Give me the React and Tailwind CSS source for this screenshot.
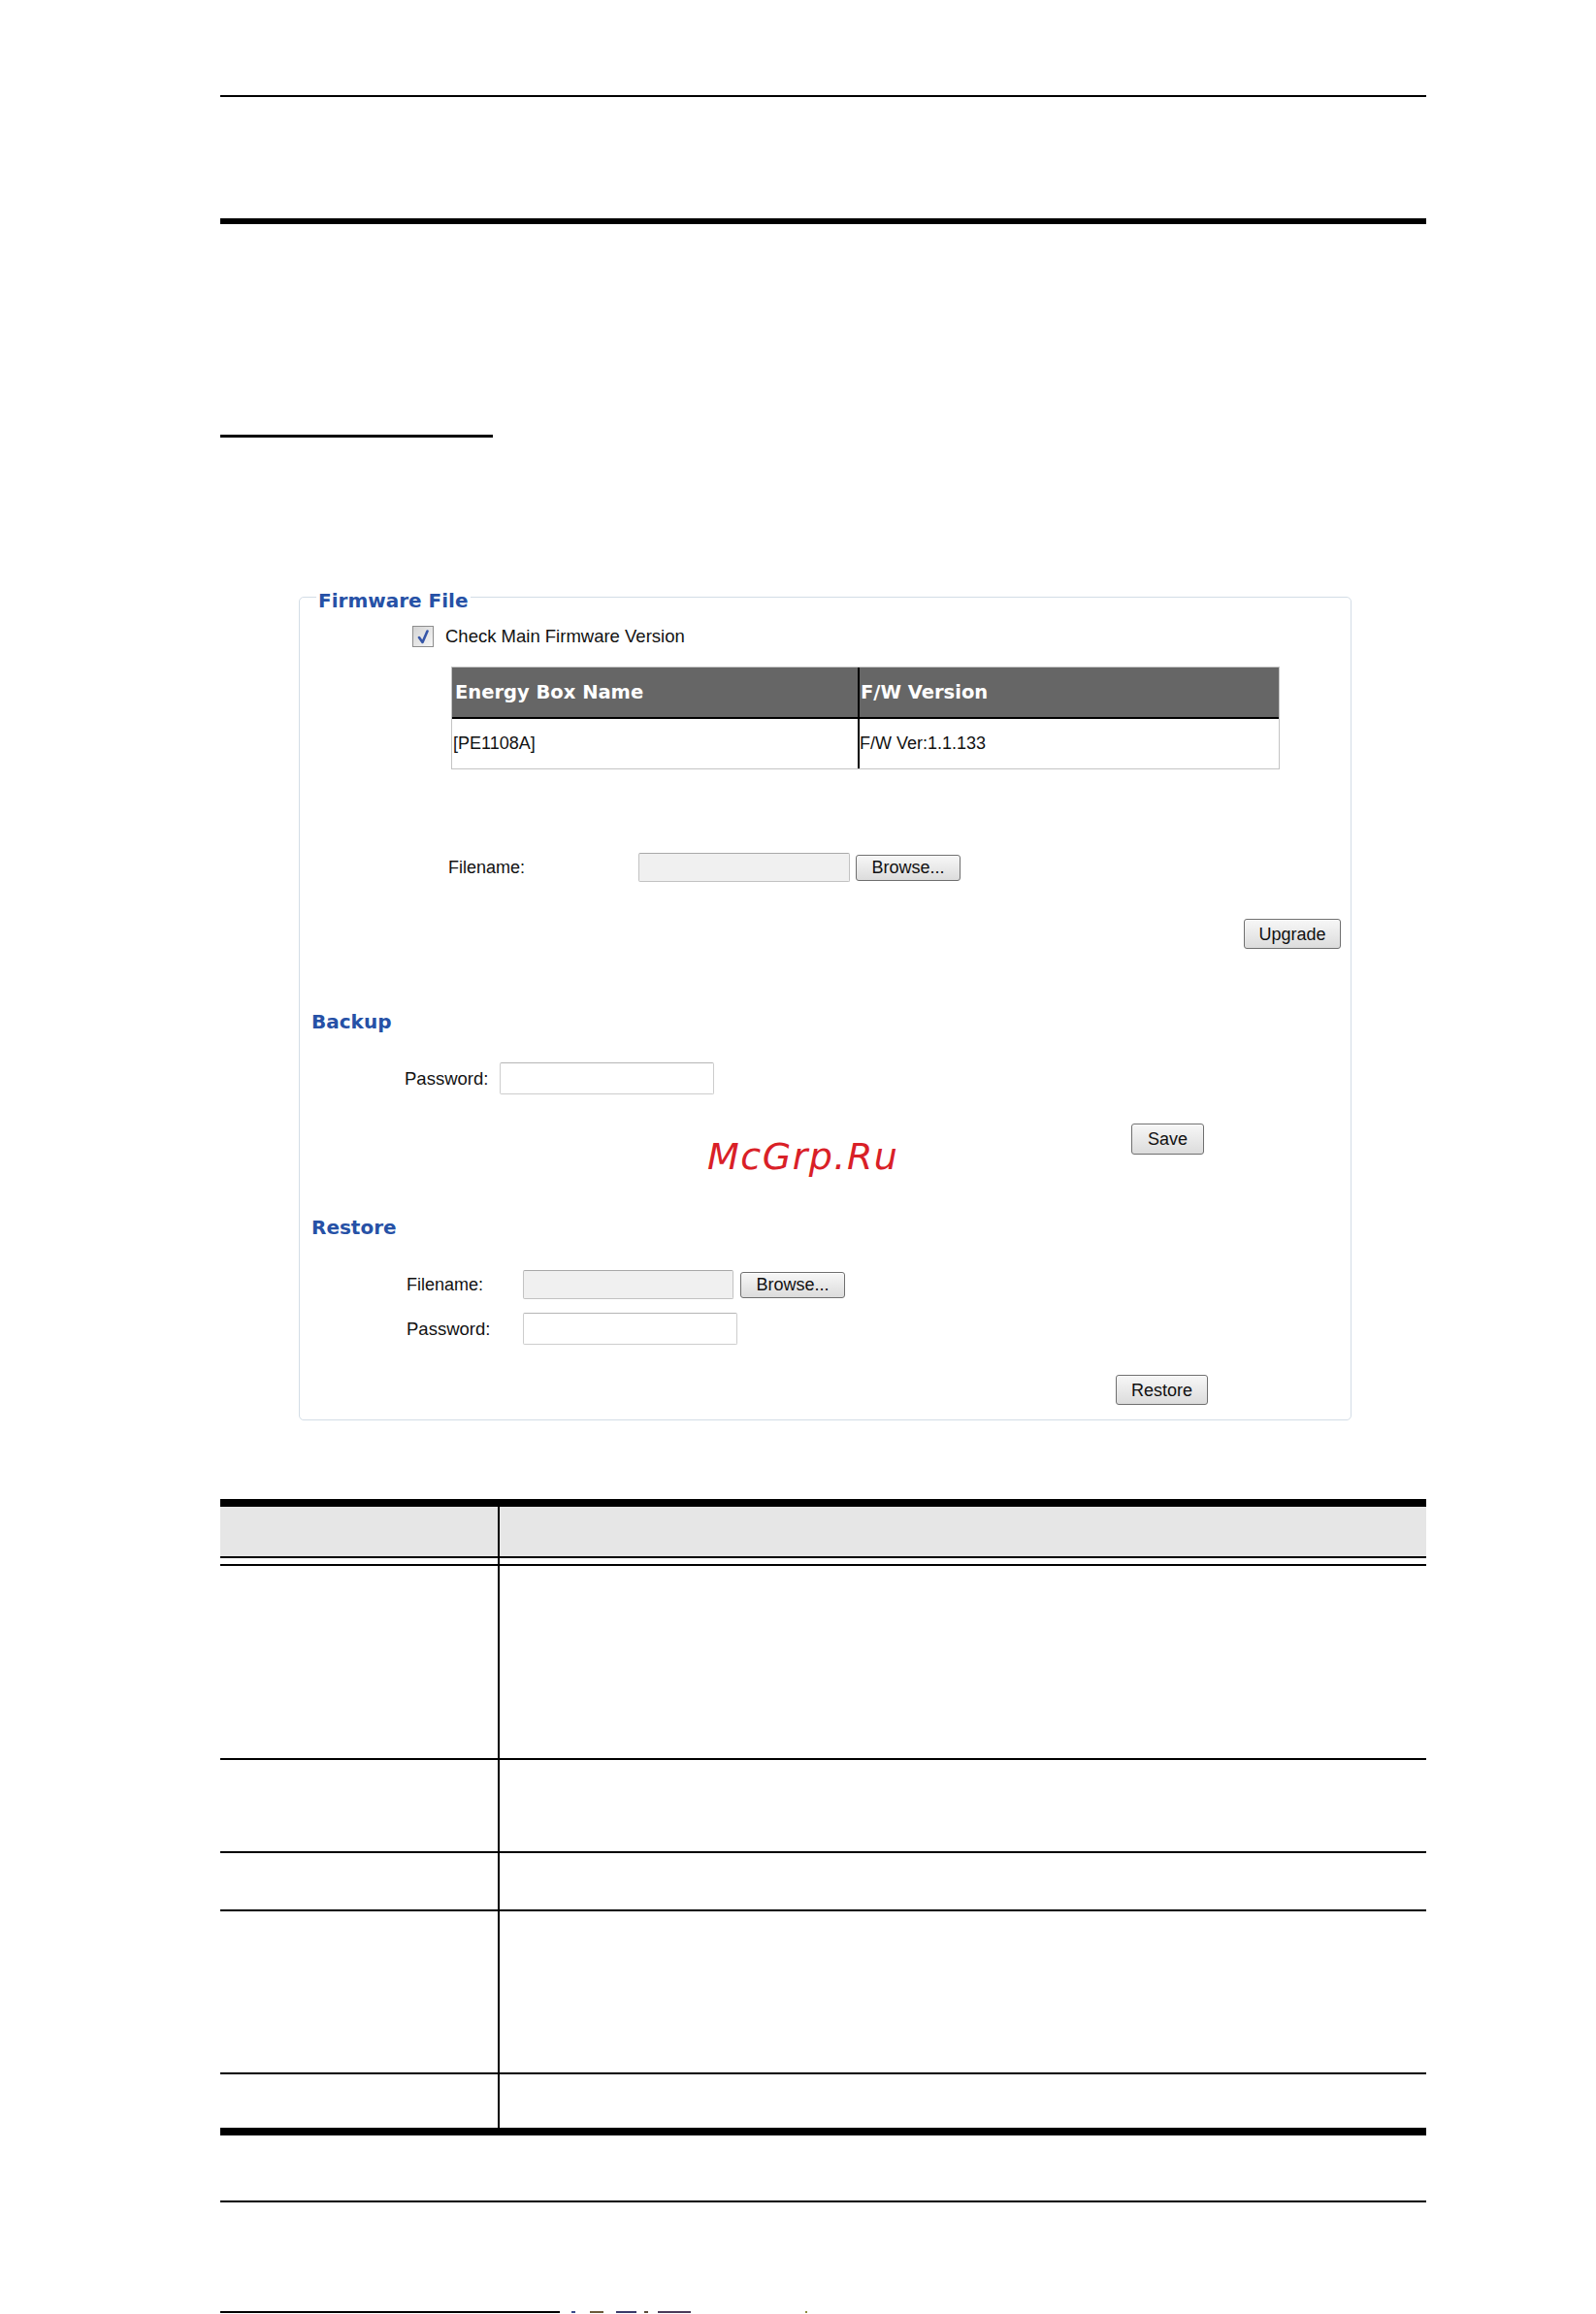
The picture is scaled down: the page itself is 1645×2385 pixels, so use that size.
import React from 'react';

const arial = "font-['Liberation_Sans',Arial,sans-serif]";
const dejavu = "font-['DejaVu_Sans',Verdana,sans-serif]";

function Button({ children, className = '' }) {
  return (
    <button
      type="button"
      className={`${arial} text-[18px] leading-none text-[#111] border border-[#6f6f6f] rounded-[3px] bg-gradient-to-b from-[#f7f7f7] to-[#dcdcdc] shadow-[inset_0_1px_0_#ffffff] flex items-center justify-center ${className}`}
    >
      {children}
    </button>
  );
}

function FileInput({ className = '' }) {
  return (
    <input
      type="text"
      readOnly
      className={`bg-[#f0f0f0] border border-[#c2c2c2] border-t-[#a8a8a8] rounded-[2px] outline-none ${className}`}
    />
  );
}

function PassInput({ className = '' }) {
  return (
    <input
      type="password"
      className={`bg-white border border-[#cdcdcd] border-t-[#b5b5b5] rounded-[2px] outline-none ${className}`}
    />
  );
}

function Heading({ children, className = '' }) {
  return (
    <div className={`${dejavu} font-bold text-[20px] leading-[24px] text-[#2651a6] ${className}`}>
      {children}
    </div>
  );
}

function Checkbox() {
  return (
    <div className="w-[22px] h-[22px] border border-[#8d8d8d] bg-gradient-to-br from-[#d4d4d4] to-[#f6f6f6] flex items-center justify-center">
      <svg width="15" height="15" viewBox="0 0 15 15">
        <path d="M3 8 L6.5 13 L11.5 1.5" fill="none" stroke="#3656a8" strokeWidth="2.6" strokeLinejoin="round" strokeLinecap="round" />
      </svg>
    </div>
  );
}

const rows = [198, 94, 58, 166, 55];

export default function App() {
  return (
    <div className="relative w-[1645px] h-[2385px] bg-white overflow-hidden pl-[227px]">
      <div className="w-[1243px] flex flex-col">
        {/* page header rules */}
        <div className="mt-[98px] h-[2px] bg-black" />
        <div className="mt-[125px] h-[6px] bg-black" />
        <div className="mt-[217px] h-[3px] w-[281px] bg-black" />

        {/* Firmware panel */}
        <div className="relative mt-[164px] ml-[81px] w-[1085px] h-[849px] border border-[#d3dde6] rounded-[5px] flex flex-col">
          <span className={`absolute top-[-9px] left-[17px] px-[2px] bg-white ${dejavu} font-bold text-[20px] leading-[24px] text-[#2651a6]`}>
            Firmware File
          </span>

          <div className="mt-[29px] ml-[116px] h-[22px] flex items-center gap-[12px]">
            <Checkbox />
            <span className={`${arial} text-[18.5px] leading-none text-[#111]`}>Check Main Firmware Version</span>
          </div>

          {/* firmware table */}
          <div className="mt-[20px] ml-[156px] w-[854px] border border-[#c4c4c4] flex flex-col">
            <div className={`h-[53px] bg-[#666666] border-b-2 border-black flex ${dejavu} font-bold text-[19.5px] text-white`}>
              <div className="w-[420px] border-r-2 border-black flex items-center pl-[3px]">Energy Box Name</div>
              <div className="flex-1 flex items-center pl-[1px]">F/W Version</div>
            </div>
            <div className={`h-[51px] bg-white flex ${arial} text-[18px] text-[#111]`}>
              <div className="w-[420px] border-r-2 border-black flex items-center pl-[1px]">[PE1108A]</div>
              <div className="flex-1 flex items-center">F/W Ver:1.1.133</div>
            </div>
          </div>

          <div className="mt-[86px] ml-[153px] h-[30px] flex items-center">
            <span className={`w-[196px] ${arial} text-[18px] text-[#111]`}>Filename:</span>
            <FileInput className="w-[218px] h-[30px]" />
            <Button className="ml-[6px] w-[108px] h-[27px]">Browse...</Button>
          </div>

          <div className="mt-[38px] pr-[10px] flex justify-end">
            <Button className="w-[100px] h-[31px]">Upgrade</Button>
          </div>

          <Heading className="mt-[63px] ml-[12px]">Backup</Heading>

          <div className="mt-[30px] ml-[108px] h-[33px] flex items-center">
            <span className={`w-[98px] ${arial} text-[18.5px] text-[#111]`}>Password:</span>
            <PassInput className="w-[221px] h-[33px]" />
          </div>

          <div className="mt-[30px] ml-[857px]">
            <Button className="w-[75px] h-[32px]">Save</Button>
          </div>

          <Heading className="mt-[63px] ml-[12px]">Restore</Heading>

          <div className="mt-[32px] ml-[110px] h-[30px] flex items-center">
            <span className={`w-[120px] ${arial} text-[18px] text-[#111]`}>Filename:</span>
            <FileInput className="w-[217px] h-[30px]" />
            <Button className="ml-[7px] w-[108px] h-[27px]">Browse...</Button>
          </div>

          <div className="mt-[14px] ml-[110px] h-[33px] flex items-center">
            <span className={`w-[120px] ${arial} text-[18.5px] text-[#111]`}>Password:</span>
            <PassInput className="w-[221px] h-[33px]" />
          </div>

          <div className="mt-[31px] ml-[841px]">
            <Button className="w-[95px] h-[31px]">Restore</Button>
          </div>
        </div>

        {/* description table */}
        <div className="mt-[81px] flex flex-col">
          <div className="h-[8px] bg-black" />
          <div className="h-[51px] bg-[#e6e6e6] flex">
            <div className="w-[288px] border-r-2 border-black" />
          </div>
          <div className="h-[10px] border-y-2 border-black flex">
            <div className="w-[288px] border-r-2 border-black" />
          </div>
          {rows.map((h, i) => (
            <div
              key={i}
              className={`flex ${i < rows.length - 1 ? 'border-b-2 border-black' : ''}`}
              style={{ height: h + (i < rows.length - 1 ? 2 : 0) }}
            >
              <div className="w-[288px] border-r-2 border-black" />
            </div>
          ))}
          <div className="h-[8px] bg-black" />
        </div>

        {/* footer rules */}
        <div className="mt-[67px] h-[2px] bg-black" />
        <div className="mt-[112px] h-[2px] flex">
          <div className="w-[350px] bg-black" />
          <div className="ml-[12px] w-[4px] bg-[#3a4a8a]" />
          <div className="ml-[15px] w-[14px] bg-[#6b5a3a]" />
          <div className="ml-[13px] w-[21px] bg-[#3a3a6a]" />
          <div className="ml-[8px] w-[4px] bg-[#5a4a3a]" />
          <div className="ml-[10px] w-[34px] bg-[#4a3a5a]" />
          <div className="ml-[118px] w-[2px] bg-[#8a8a3a]" />
        </div>
      </div>

      {/* watermark */}
      <span className="absolute left-[729px] top-[1173px] font-['DejaVu_Sans',sans-serif] italic text-[38px] leading-none tracking-[1.5px] text-[#d92027]">
        McGrp.Ru
      </span>
    </div>
  );
}
